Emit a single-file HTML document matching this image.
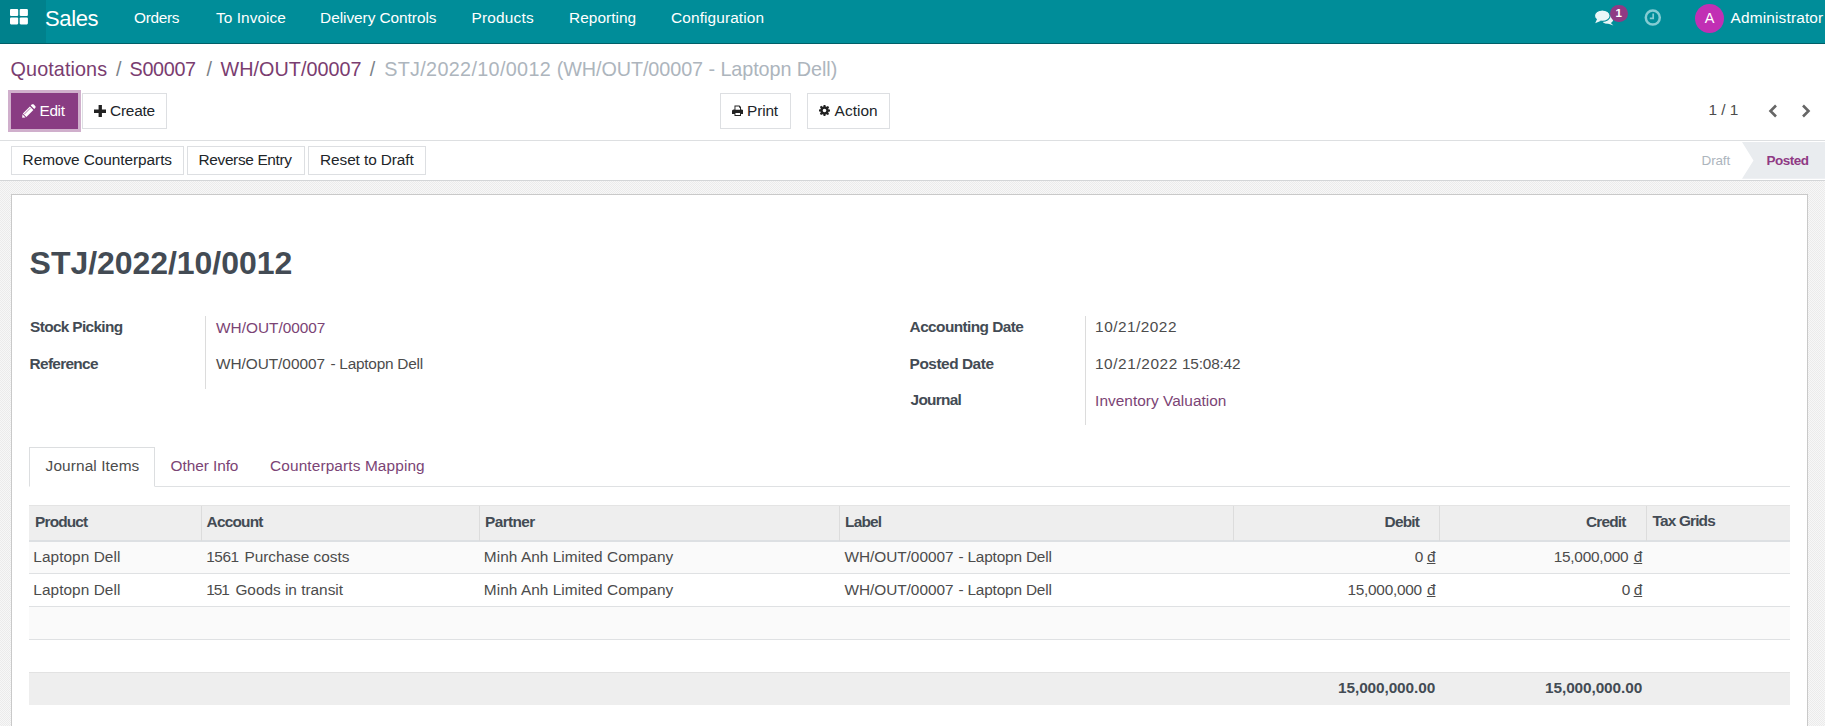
<!DOCTYPE html>
<html lang="en">
<head>
<meta charset="utf-8">
<title>STJ/2022/10/0012 - Odoo</title>
<style>
*{box-sizing:border-box;}
html,body{margin:0;padding:0;}
html{width:1825px;height:726px;overflow:hidden;}
body{width:1825px;height:726px;overflow:hidden;position:relative;background:#fff;
  font-family:"Liberation Sans",sans-serif;font-size:15.4px;line-height:23.1px;color:#4c4c4c;}
a{text-decoration:none;}
.abs{position:absolute;}
.box{position:absolute;}

/* text elements (all absolutely positioned on the page) */
.t{position:absolute;white-space:nowrap;margin:0;font-weight:400;font-size:15.4px;line-height:23.1px;color:#4c4c4c;}
.brand{font-size:22px;line-height:36px;color:#fff;}
.mi{line-height:36px;color:#fff;}
.bc{font-size:19.8px;line-height:26px;}
.bc.sp{color:#7b8288;}
.bc.mu{color:#adb5bd;}
.lk{color:#7b4475;}
.bc.lk{color:#7a3d70;}
.bt{color:#212529;}
.bt.w{color:#fff;}
.st{font-size:13.5px;}
.st.mu{color:#adb5bd;}
.st.po{color:#8f3a84;font-weight:700;}
.h1{font-size:32px;line-height:38px;font-weight:700;color:#434b54;}
.lb{font-weight:700;color:#434b54;}
u{text-decoration:underline;}

/* ---------- navbar ---------- */
#nav{left:0;top:0;width:1825px;height:44px;background:#008d99;border-bottom:1px solid #005f68;}
#apps{left:0;top:0;width:46px;height:43px;background:#00818c;}

/* ---------- control panel ---------- */
#cp{left:0;top:44px;width:1825px;height:97px;background:#fff;border-bottom:1px solid #dddfe1;}
.btn{position:absolute;border:1px solid #dddfe2;background:#fff;}

/* ---------- status bar ---------- */
#sb{left:0;top:141px;width:1825px;height:40px;background:#fff;border-bottom:1px solid #d3d5d7;}

/* ---------- content ---------- */
#content{left:0;top:181px;width:1825px;height:545px;background-color:#f7f7f7;
  background-image:linear-gradient(45deg,#ebebeb 25%,transparent 25%,transparent 75%,#ebebeb 75%),linear-gradient(45deg,#ebebeb 25%,transparent 25%,transparent 75%,#ebebeb 75%);
  background-size:2px 2px;background-position:0 0,1px 1px;}
#sheet{left:11px;top:194px;width:1797px;height:532px;background:#fff;border:1px solid #c9c9c9;border-bottom:0;}
.vsep{position:absolute;width:1px;background:#dcdcdc;}
.hl{position:absolute;height:1px;background:#dfe1e3;}
.cs{position:absolute;top:506px;width:1px;height:35px;background:#dcdcdc;}
</style>
</head>
<body>

<!-- ===================== NAVBAR ===================== -->
<header class="o_main_navbar">
  <div id="nav" class="box"></div>
  <a class="o_menu_toggle" title="Applications"><div id="apps" class="box"></div><svg class="abs" style="left:10.300px;top:8.800px" width="18" height="16" viewBox="0 0 18 16"><g fill="#fff"><rect x="0" y="0" width="8.200" height="7" rx="1.100"/><rect x="9.700" y="0" width="8.200" height="7" rx="1.100"/><rect x="0" y="8.400" width="8.200" height="7" rx="1.100"/><rect x="9.700" y="8.400" width="8.200" height="7" rx="1.100"/></g></svg></a>
  <span id="brand" class="t brand" style="left:45.1px;top:1px;letter-spacing:-0.42px;">Sales</span>
  <nav class="o_menu_sections">
    <span id="m1" class="t mi" style="left:134.1px;top:0px;letter-spacing:-0.34px;">Orders</span>
    <span id="m2" class="t mi" style="left:216.1px;top:0px;letter-spacing:0.04px;">To Invoice</span>
    <span id="m3" class="t mi" style="left:320.1px;top:0px;letter-spacing:-0.05px;">Delivery Controls</span>
    <span id="m4" class="t mi" style="left:471.6px;top:0px;letter-spacing:0.18px;">Products</span>
    <span id="m5" class="t mi" style="left:569.1px;top:0px;letter-spacing:0.04px;">Reporting</span>
    <span id="m6" class="t mi" style="left:671.1px;top:0px;letter-spacing:0.11px;">Configuration</span>
  </nav>
  <div class="o_menu_systray">
    <div class="o_mail_systray_item" title="Conversations"><svg class="abs" style="left:1594px;top:9px" width="20" height="18" viewBox="0 0 20 18"><g fill="#eaf7f8"><ellipse cx="13.400" cy="10.300" rx="5.900" ry="4.400"/><path d="M16 13.200L19.400 16.600 13.800 14.600Z"/><ellipse cx="8.300" cy="6.700" rx="7.800" ry="5.700" stroke="#008d99" stroke-width="1.100"/><path d="M3.200 9.800L1.200 14.200 7 11.800Z"/></g></svg><div class="abs" style="left:1609.500px;top:4.500px;width:18.500px;height:17px;border-radius:8.500px;background:#8f3a84;color:#fff;font-size:11.500px;font-weight:700;line-height:16.500px;text-align:center;">1</div></div>
    <div class="o_activity_menu" title="Activities"><svg class="abs" style="left:1644px;top:9px" width="18" height="18" viewBox="0 0 18 18"><circle cx="8.800" cy="8.600" r="7" fill="none" stroke="#84ccd3" stroke-width="2.500"/><path d="M9.200 4.600v4.700H5.800" fill="none" stroke="#84ccd3" stroke-width="1.700"/></svg></div>
    <div class="o_user_menu"><div class="abs" style="left:1695px;top:4px;width:29px;height:29px;border-radius:50%;background:#c12fb4;color:#fff;font-size:14.500px;line-height:29px;text-align:center;">A</div><span id="adm" class="t mi" style="left:1730.6px;top:0px;letter-spacing:0.16px;">Administrator</span></div>
  </div>
</header>

<!-- ===================== CONTROL PANEL ===================== -->
<div class="o_control_panel">
  <div id="cp" class="box"></div>
  <div class="breadcrumb">
    <a id="bc1" class="t bc lk" style="left:10.6px;top:56px;letter-spacing:0.09px;">Quotations</a><span id="bcs1" class="t bc sp" style="left:115.9px;top:56px;">/</span>
    <a id="bc2" class="t bc lk" style="left:129.6px;top:56px;letter-spacing:-0.34px;">S00007</a><span id="bcs2" class="t bc sp" style="left:206.5px;top:56px;">/</span>
    <a id="bc3" class="t bc lk" style="left:220.6px;top:56px;letter-spacing:0.02px;">WH/OUT/00007</a><span id="bcs3" class="t bc sp" style="left:369.7px;top:56px;">/</span>
    <span id="bc4" class="t bc mu" style="left:384.15px;top:56px;letter-spacing:0.33px;">STJ/2022/10/0012</span><span id="bc4b" class="t bc mu" style="left:556.65px;top:56px;letter-spacing:-0.07px;">(WH/OUT/00007 - Laptopn Dell)</span>
  </div>
  <div class="o_cp_buttons">
    <div role="button" class="o_form_button_edit"><div class="abs" style="left:8px;top:90.200px;width:73px;height:41.500px;background:#d0afcc;"></div><div class="btn" style="left:11px;top:93px;width:67px;height:36px;background:#893c83;border-color:#893c83;"></div><svg class="abs" style="left:21.800px;top:103.800px" width="14.400" height="13.800" viewBox="0 0 14.400 13.800"><g fill="#fff"><path d="M9.700 0.600c.600-.600 1.500-.600 2.100 0l1.400 1.400c.600.600.600 1.500 0 2.100l-1 1-3.500-3.500z"/><path d="M7.900 2.400l3.500 3.500-7 7-3.500-3.500z"/><path d="M0.400 10.300l3.100 3.100-3.300.300z"/></g><path d="M2.300 10.200l6-6" stroke="#893c83" stroke-width=".700" fill="none"/></svg><span id="tEdit" class="t bt w" style="left:39.6px;top:98.6px;letter-spacing:-0.4px;">Edit</span></div>
    <div role="button" class="o_form_button_create"><div class="btn" style="left:82px;top:93px;width:85px;height:36px;"></div><svg class="abs" style="left:93.500px;top:104.500px" width="12.500" height="12.500" viewBox="0 0 12 12"><path fill="#222" d="M4.400 0h3.200v4.400H12v3.200H7.600V12H4.400V7.600H0V4.400h4.400z"/></svg><span id="tCreate" class="t bt" style="left:110.1px;top:98.6px;letter-spacing:-0.24px;">Create</span></div>
  </div>
  <div class="o_cp_action_menus">
    <div role="button" class="o_dropdown_print"><div class="btn" style="left:720px;top:93px;width:71px;height:36px;"></div><svg class="abs" style="left:731.500px;top:105px" width="11.500" height="11.500" viewBox="0 0 12 12"><path fill="#222" d="M2.600 0.600h5.200l1.600 1.600v2.400h0.800c1 0 1.800.800 1.800 1.800v3H9.400v2H2.600v-2H0v-3c0-1 .800-1.800 1.800-1.800h.800zm1 1v3.400h4.800V2.800H7.400V1.600zm0 6.800v2h4.800v-2z"/></svg><span id="tPrint" class="t bt" style="left:747.1px;top:98.6px;letter-spacing:-0.17px;">Print</span></div>
    <div role="button" class="o_dropdown_action"><div class="btn" style="left:807px;top:93px;width:83px;height:36px;"></div><svg class="abs" style="left:819px;top:105.300px" width="11" height="11" viewBox="0 0 12 12"><path fill="#222" fill-rule="evenodd" d="M5 0h2l.300 1.600 1 .400L9.700 1l1.400 1.400-1 1.400.400 1L12 5v2l-1.600.300-.400 1 1 1.400L9.600 11l-1.400-1-1 .400L7 12H5l-.300-1.600-1-.400L2.300 11 .900 9.600l1-1.400-.400-1L0 7V5l1.600-.300.400-1L1 2.300 2.400.900l1.400 1 1-.400zM6 4a2 2 0 100 4 2 2 0 000-4z"/></svg><span id="tAction" class="t bt" style="left:834.6px;top:98.6px;letter-spacing:0.06px;">Action</span></div>
  </div>
  <div class="o_cp_pager">
    <span id="pager" class="t tx" style="left:1708.6px;top:98px;letter-spacing:-0.03px;">1 / 1</span>
    <span role="button" class="o_pager_previous"><svg class="abs" style="left:1767px;top:104px" width="12" height="14" viewBox="0 0 12 14"><path d="M9 1.500L3.500 7 9 12.500" fill="none" stroke="#666" stroke-width="2.600"/></svg></span>
    <span role="button" class="o_pager_next"><svg class="abs" style="left:1800px;top:104px" width="12" height="14" viewBox="0 0 12 14"><path d="M3 1.500L8.500 7 3 12.500" fill="none" stroke="#666" stroke-width="2.600"/></svg></span>
  </div>
</div>

<!-- ===================== STATUS BAR ===================== -->
<div class="o_form_statusbar">
  <div id="sb" class="box"></div>
  <div class="o_statusbar_buttons">
    <div role="button"><div class="btn" style="left:11px;top:146px;width:173px;height:29px;"></div><span id="sb1" class="t bt" style="left:22.6px;top:148px;letter-spacing:-0.06px;">Remove Counterparts</span></div>
    <div role="button"><div class="btn" style="left:187px;top:146px;width:118px;height:29px;"></div><span id="sb2" class="t bt" style="left:198.6px;top:148px;letter-spacing:-0.35px;">Reverse Entry</span></div>
    <div role="button"><div class="btn" style="left:308px;top:146px;width:118px;height:29px;"></div><span id="sb3" class="t bt" style="left:320.1px;top:148px;letter-spacing:-0.1px;">Reset to Draft</span></div>
  </div>
  <div class="o_statusbar_status">
    <span id="stDraft" class="t st mu" style="left:1701.6px;top:149px;letter-spacing:-0.17px;">Draft</span>
    <svg class="abs" style="left:1741.800px;top:142px" width="83.200" height="37" viewBox="0 0 83.200 37"><path d="M0 0H83.200V36.800H0L11.500 18.400Z" fill="#e9ecef"/></svg><span id="stPosted" class="t st po" style="left:1766.6px;top:149px;letter-spacing:-0.54px;">Posted</span>
  </div>
</div>

<!-- ===================== FORM SHEET ===================== -->
<main class="o_form_sheet_bg">
  <div id="content" class="box"></div>
  <div id="sheet" class="box"></div>

  <h1 id="h1" class="t h1" style="left:29.6px;top:244px;letter-spacing:-0.05px;">STJ/2022/10/0012</h1>

  <div class="o_group o_group_left">
    <div class="vsep" style="left:205px;top:316px;height:72.500px;"></div>
    <div class="o_field_row"><span id="l1" class="t lb" style="left:30.1px;top:315px;letter-spacing:-0.66px;">Stock Picking</span><a id="v1" class="t tx lk" style="left:216.1px;top:316px;letter-spacing:-0.02px;">WH/OUT/00007</a></div>
    <div class="o_field_row"><span id="l2" class="t lb" style="left:29.6px;top:352px;letter-spacing:-0.69px;">Reference</span><span id="v2" class="t tx" style="left:215.9px;top:352px;letter-spacing:-0.03px;">WH/OUT/00007</span><span id="v2b" class="t tx" style="left:330.4px;top:352px;letter-spacing:-0.24px;">- Laptopn Dell</span></div>
  </div>
  <div class="o_group o_group_right">
    <div class="vsep" style="left:1085px;top:316px;height:109px;"></div>
    <div class="o_field_row"><span id="l3" class="t lb" style="left:909.6px;top:315px;letter-spacing:-0.58px;">Accounting Date</span><span id="v3" class="t tx" style="left:1095.1px;top:315px;letter-spacing:0.48px;">10/21/2022</span></div>
    <div class="o_field_row"><span id="l4" class="t lb" style="left:909.6px;top:352px;letter-spacing:-0.46px;">Posted Date</span><span id="v4" class="t tx" style="left:1094.9px;top:352px;letter-spacing:0.6px;">10/21/2022</span><span id="v4b" class="t tx" style="left:1181.9px;top:352px;letter-spacing:-0.18px;">15:08:42</span></div>
    <div class="o_field_row"><span id="l5" class="t lb" style="left:910.6px;top:388px;letter-spacing:-0.72px;">Journal</span><a id="v5" class="t tx lk" style="left:1095.1px;top:388.5px;letter-spacing:0.04px;">Inventory Valuation</a></div>
  </div>

  <!-- notebook -->
  <div class="o_notebook">
    <div class="nav-tabs">
      <div class="hl" style="left:29px;top:486px;width:1761px;"></div>
      <div class="abs" style="left:29px;top:447px;width:126px;height:40px;border:1px solid #dcdee0;border-bottom:1px solid #fff;background:#fff;"></div>
      <span id="tab1" class="t tx" style="left:45.6px;top:454px;letter-spacing:0.11px;">Journal Items</span>
      <a id="tab2" class="t tx lk" style="left:170.6px;top:454px;letter-spacing:-0.07px;">Other Info</a>
      <a id="tab3" class="t tx lk" style="left:270.1px;top:454px;letter-spacing:0.12px;">Counterparts Mapping</a>
    </div>

    <!-- journal items list -->
    <div class="o_list_view" role="table">
      <div role="row" class="o_list_header">
        <div class="abs" style="left:29px;top:505px;width:1761px;height:37px;background:#eeeeee;border-top:1px solid #e4e4e4;border-bottom:2px solid #dde0e3;"></div>
        <div class="cs" style="left:201px;"></div><div class="cs" style="left:479px;"></div><div class="cs" style="left:839px;"></div><div class="cs" style="left:1233px;"></div><div class="cs" style="left:1439px;"></div><div class="cs" style="left:1646px;"></div>
        <span id="th1" class="t lb" style="left:35.1px;top:510px;letter-spacing:-0.86px;">Product</span><span id="th2" class="t lb" style="left:206.6px;top:510px;letter-spacing:-0.78px;">Account</span><span id="th3" class="t lb" style="left:485.1px;top:510px;letter-spacing:-0.62px;">Partner</span><span id="th4" class="t lb" style="left:845.1px;top:510px;letter-spacing:-0.81px;">Label</span><span id="th5" class="t lb" style="left:1384.6px;top:510px;letter-spacing:-0.81px;">Debit</span><span id="th6" class="t lb" style="left:1586.1px;top:510px;letter-spacing:-0.84px;">Credit</span><span id="th7" class="t lb" style="left:1652.6px;top:509px;letter-spacing:-0.84px;">Tax Grids</span>
      </div>
      <div role="row" class="o_data_row">
        <div class="abs" style="left:29px;top:542px;width:1761px;height:31px;background:#fafafa;"></div><div class="hl" style="left:29px;top:573px;width:1761px;"></div>
        <span id="r1c1" class="t tx" style="left:33.35px;top:545px;letter-spacing:0.05px;">Laptopn Dell</span>
        <span id="r1c2" class="t tx" style="left:206.15px;top:545px;letter-spacing:-0.43px;">1561</span><span id="r1c2b" class="t tx" style="left:244.4px;top:545px;letter-spacing:-0.02px;">Purchase costs</span>
        <span id="r1c3" class="t tx" style="left:483.85px;top:545px;letter-spacing:0.05px;">Minh Anh Limited Company</span>
        <span id="r1c4" class="t tx" style="left:844.4px;top:545px;letter-spacing:-0.03px;">WH/OUT/00007</span><span id="r1c4b" class="t tx" style="left:958.4px;top:545px;letter-spacing:-0.18px;">- Laptopn Dell</span>
        <span id="r1c5" class="t tx" style="left:1414.65px;top:545px;">0</span><span id="r1c5b" class="t tx" style="left:1426.9px;top:545px;"><u>đ</u></span>
        <span id="r1c6" class="t tx" style="left:1553.65px;top:545px;letter-spacing:-0.23px;">15,000,000</span><span id="r1c6b" class="t tx" style="left:1633.65px;top:545px;"><u>đ</u></span>
      </div>
      <div role="row" class="o_data_row">
        <div class="hl" style="left:29px;top:606px;width:1761px;"></div>
        <span id="r2c1" class="t tx" style="left:33.35px;top:578px;letter-spacing:0.05px;">Laptopn Dell</span>
        <span id="r2c2" class="t tx" style="left:206.15px;top:578px;letter-spacing:-1px;">151</span><span id="r2c2b" class="t tx" style="left:235.4px;top:578px;letter-spacing:-0.01px;">Goods in transit</span>
        <span id="r2c3" class="t tx" style="left:483.85px;top:578px;letter-spacing:0.05px;">Minh Anh Limited Company</span>
        <span id="r2c4" class="t tx" style="left:844.4px;top:578px;letter-spacing:-0.03px;">WH/OUT/00007</span><span id="r2c4b" class="t tx" style="left:958.4px;top:578px;letter-spacing:-0.18px;">- Laptopn Dell</span>
        <span id="r2c5" class="t tx" style="left:1347.4px;top:578px;letter-spacing:-0.25px;">15,000,000</span><span id="r2c5b" class="t tx" style="left:1426.9px;top:578px;"><u>đ</u></span>
        <span id="r2c6" class="t tx" style="left:1621.65px;top:578px;">0</span><span id="r2c6b" class="t tx" style="left:1633.65px;top:578px;"><u>đ</u></span>
      </div>
      <div role="row" class="o_empty_row"><div class="abs" style="left:29px;top:607px;width:1761px;height:32px;background:#fafafa;"></div><div class="hl" style="left:29px;top:639px;width:1761px;"></div></div>
      <div role="row" class="o_list_footer">
        <div class="abs" style="left:29px;top:672px;width:1761px;height:33px;background:#eeeeee;border-top:1px solid #e2e2e2;"></div>
        <span id="f5" class="t lb" style="left:1338.1px;top:676px;letter-spacing:-0.11px;">15,000,000.00</span><span id="f6" class="t lb" style="left:1545.1px;top:676px;letter-spacing:-0.11px;">15,000,000.00</span>
      </div>
    </div>
  </div>
</main>

</body>
</html>
